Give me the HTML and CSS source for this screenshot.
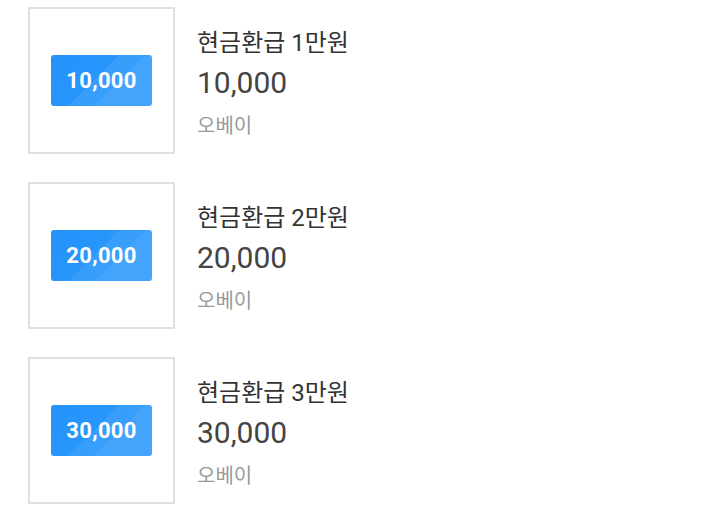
FILE: index.html
```html
<!DOCTYPE html>
<html lang="ko">
<head>
    <meta charset="UTF-8">
    <meta name="viewport" content="width=device-width, initial-scale=1.0">
    <title>현금환급</title>
    <link rel="stylesheet" href="styles.css">
</head>
<body>
    <ul class="product-list">
        <li class="product">
            <div class="thumb"><span class="badge">10,000</span></div>
            <div class="info">
                <div class="name">현금환급 1만원</div>
                <div class="price">10,000</div>
                <div class="brand">오베이</div>
            </div>
        </li>
        <li class="product">
            <div class="thumb"><span class="badge">20,000</span></div>
            <div class="info">
                <div class="name">현금환급 2만원</div>
                <div class="price">20,000</div>
                <div class="brand">오베이</div>
            </div>
        </li>
        <li class="product">
            <div class="thumb"><span class="badge">30,000</span></div>
            <div class="info">
                <div class="name">현금환급 3만원</div>
                <div class="price">30,000</div>
                <div class="brand">오베이</div>
            </div>
        </li>
    </ul>
</body>
</html>
```

FILE: styles.css
```css
body {
    margin: 0;
    background: #fff;
    font-family: Roboto, 'Noto Sans CJK KR', sans-serif;
    color: #333;
}

.product-list {
    list-style: none;
    margin: 0;
    padding: 7px 0 0 28px;
    display: flex;
    flex-direction: column;
    gap: 28px;
}

.product {
    display: flex;
    align-items: flex-start;
}

.thumb {
    width: 143px;
    height: 143px;
    border: 2px solid #e0e0e0;
    display: flex;
    align-items: center;
    justify-content: center;
    flex-shrink: 0;
}

.badge {
    width: 101px;
    height: 51px;
    border-radius: 3px;
    display: flex;
    align-items: center;
    justify-content: center;
    background: linear-gradient(135deg, #2392fb 0%, #2896fb 45%, #389efc 45%, #389efc 62%, #44a4fc 62%, #44a4fc 100%);
    color: #fff;
    font-family: Roboto, sans-serif;
    font-weight: 700;
    font-size: 22px;
    letter-spacing: 0.3px;
}

.info {
    margin-left: 22px;
    padding-top: 21px;
    display: flex;
    flex-direction: column;
}

.name {
    font-size: 24px;
    line-height: 30px;
    color: #333;
}

.price {
    font-size: 30px;
    line-height: 36px;
    color: #444;
    margin-top: 7px;
}

.brand {
    font-family: 'Noto Sans CJK KR', sans-serif;
    font-size: 20px;
    line-height: 26px;
    color: #999;
    margin-top: 11px;
}
```
